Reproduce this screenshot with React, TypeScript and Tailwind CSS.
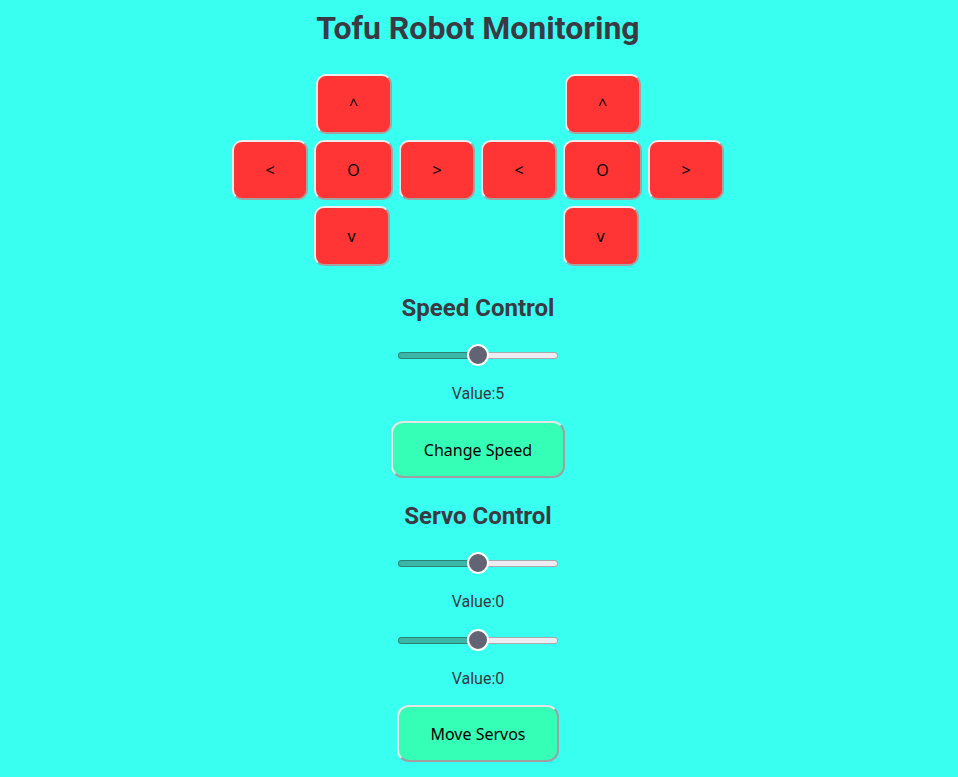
import React, { useState } from 'react';

const padBtn =
  'h-[60px] rounded-[10px] bg-[#ff3535] text-black text-[16px] border-2 border-t-[#ededed] border-l-[#ededed] border-r-[#a3a3a3] border-b-[#a3a3a3] font-["Noto_Sans",sans-serif] flex items-center justify-center';

const Pad: React.FC<{ side: string }> = ({ side }) => (
  <div className="flex flex-col gap-[6px]">
    <div className="flex justify-center">
      <button className={`${padBtn} w-[76px]`}>^</button>
    </div>
    <div className="flex gap-[6px]">
      <button className={`${padBtn} w-[76px]`} aria-label={`${side} left`}>&lt;</button>
      <button className={`${padBtn} w-[79px]`}>O</button>
      <button className={`${padBtn} w-[76px]`}>&gt;</button>
    </div>
    <div className="flex justify-center">
      <button className={`${padBtn} w-[76px] -translate-x-[2px]`}>v</button>
    </div>
  </div>
);

const Slider: React.FC<{ value: number; min: number; max: number; onChange: (v: number) => void }> = ({
  value,
  min,
  max,
  onChange,
}) => {
  const pct = ((value - min) / (max - min)) * 100;
  return (
    <input
      type="range"
      min={min}
      max={max}
      value={value}
      onChange={(e) => onChange(Number(e.target.value))}
      style={{ background: `linear-gradient(to right, #3ab7a6 ${pct}%, #ececf2 ${pct}%)` }}
      className="appearance-none w-[160px] h-[7px] rounded-full shadow-[inset_0_0_0_1px_rgba(0,0,0,0.28)] outline-none cursor-pointer [&::-webkit-slider-thumb]:appearance-none [&::-webkit-slider-thumb]:w-[22px] [&::-webkit-slider-thumb]:h-[22px] [&::-webkit-slider-thumb]:rounded-full [&::-webkit-slider-thumb]:bg-[#626373] [&::-webkit-slider-thumb]:border-2 [&::-webkit-slider-thumb]:border-white"
    />
  );
};

const greenBtn =
  'h-[57px] rounded-[12px] bg-[#35ffb6] text-black text-[16px] border-2 border-t-[#e6e6e6] border-l-[#e6e6e6] border-r-[#a0a0a0] border-b-[#a0a0a0] font-["Noto_Sans",sans-serif]';

export default function App() {
  const [speed, setSpeed] = useState(5);
  const [servoA, setServoA] = useState(0);
  const [servoB, setServoB] = useState(0);

  return (
    <div className='min-h-screen bg-[#38fff0] flex flex-col items-center pr-[2px] font-["Roboto",sans-serif] text-[#3a3a44]'>
      <h1 className="mt-[9px] text-[32px] font-bold leading-[38px]">Tofu Robot Monitoring</h1>

      <div className="mt-[27px] flex gap-[6px]">
        <Pad side="left" />
        <Pad side="right" />
      </div>

      <h2 className="mt-[27px] text-[24px] font-bold leading-[30px]">Speed Control</h2>
      <div className="mt-[20px] h-[24px] flex items-center">
        <Slider value={speed} min={0} max={10} onChange={setSpeed} />
      </div>
      <p className="mt-[17px] text-[16px] leading-[20px]">Value:{speed}</p>
      <button className={`${greenBtn} mt-[17px] w-[174px]`}>Change Speed</button>

      <h2 className="mt-[23px] text-[24px] font-bold leading-[30px]">Servo Control</h2>
      <div className="mt-[20px] h-[24px] flex items-center">
        <Slider value={servoA} min={-90} max={90} onChange={setServoA} />
      </div>
      <p className="mt-[17px] text-[16px] leading-[20px]">Value:{servoA}</p>
      <div className="mt-[16px] h-[24px] flex items-center">
        <Slider value={servoB} min={-90} max={90} onChange={setServoB} />
      </div>
      <p className="mt-[17px] text-[16px] leading-[20px]">Value:{servoB}</p>
      <button className={`${greenBtn} mt-[16px] w-[162px]`}>Move Servos</button>
      <div className="h-[14px]" />
    </div>
  );
}
